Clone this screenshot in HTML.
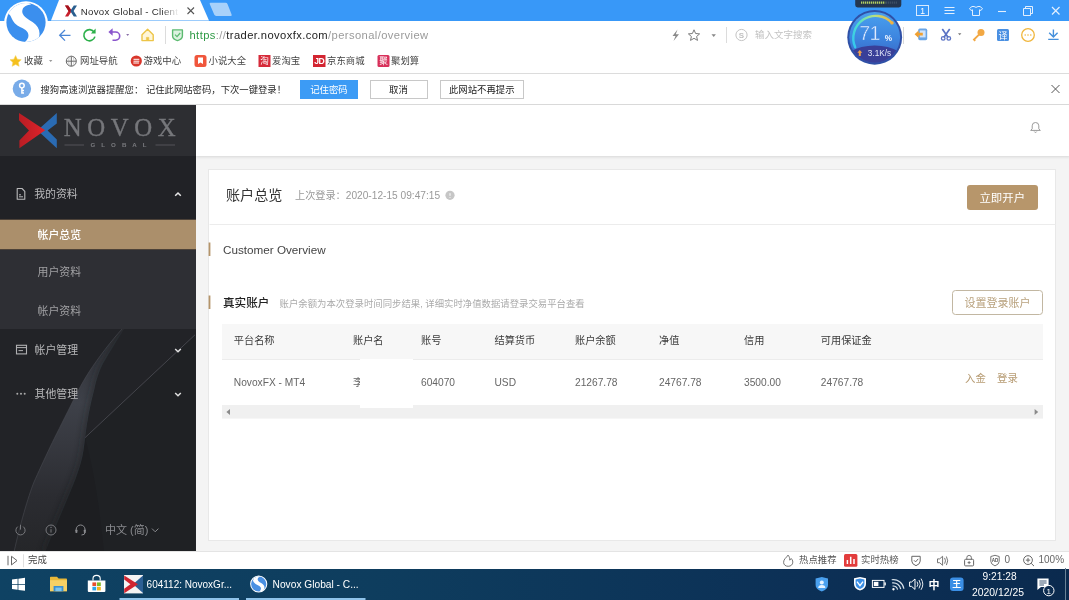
<!DOCTYPE html>
<html lang="zh-CN">
<head>
<meta charset="utf-8">
<title>Novox Global - Client</title>
<style>
*{box-sizing:border-box;margin:0;padding:0}
html,body{width:1069px;height:600px;overflow:hidden;background:#fff}
body{font-family:"Liberation Sans","Noto Sans CJK SC",sans-serif;font-size:12px;color:#333;position:relative}
.abs{position:absolute}
#titlebar{left:0;top:0;width:1069px;height:20.5px;background:#3898f8}
#toolbar{left:0;top:21px;width:1069px;height:27.5px;background:#fff;border-bottom:1px solid #ececec}
#bookmarks{left:0;top:48px;width:1069px;height:26px;background:#fff;border-bottom:1px solid #dcdcdc}
#notify{left:0;top:74px;width:1069px;height:31px;background:#fff;border-bottom:1px solid #d9d9d9}
#page{left:0;top:105px;width:1069px;height:446px;background:#f4f4f4;overflow:hidden}
#status{left:0;top:551px;width:1069px;height:18px;background:#fff;border-top:1px solid #e4e4e4}
#taskbar{left:0;top:569px;width:1069px;height:31px;background:linear-gradient(90deg,#0f4263 0%,#0e3d5e 35%,#0c3056 75%,#0b2a4e 100%)}
.t{position:absolute;white-space:nowrap;line-height:1}
#titlebar,#toolbar,#bookmarks,#notify,#page,#status,#taskbar{will-change:transform}
#sidebar{left:0;top:0;width:195.6px;height:447px;background:#232428;overflow:hidden}
#sidehead{left:0;top:0;width:195.6px;height:51.2px;background:#2d2e32}
#topwhite{left:195.6px;top:0;width:874px;height:51.2px;background:#fff;box-shadow:0 1px 3px rgba(0,0,0,.12)}
#card{left:208.4px;top:64.2px;width:847.6px;height:372px;background:#fff;border:1px solid #e8e8e8}

.cj{font-family:"Liberation Sans","Noto Sans CJK SC",sans-serif}
.bm{position:absolute;top:0;height:25px;line-height:25px;font-size:9.4px;color:#444;white-space:nowrap}
.nbtn{position:absolute;top:6px;height:19px;line-height:18px;font-size:9.4px;text-align:center;border:1px solid #c8c8c8;color:#222;background:#fff;white-space:nowrap}
svg{position:absolute;overflow:visible}

.mi{position:absolute;left:0;width:195px;white-space:nowrap;font-size:10.9px;color:#c4c4c6}
.mi span{position:absolute;line-height:1}

.th{position:absolute;top:231px;font-size:10.2px;color:#3c3c3c;white-space:nowrap;line-height:1}
.td{position:absolute;top:272.5px;font-size:10.2px;color:#666;white-space:nowrap;line-height:1}
</style>
</head>
<body>
<svg id="sogou" width="60" height="50" viewBox="0 0 60 50" style="left:0;top:0;z-index:5">
  <defs><clipPath id="sgc"><circle cx="26" cy="22.5" r="19.6"/></clipPath></defs>
  <circle cx="26" cy="23.3" r="22" fill="#fff"/>
  <circle cx="26" cy="22.5" r="19.6" fill="#3b8fee"/>
  <g clip-path="url(#sgc)">
    <path d="M8 14 C11 14 11.5 20 15 23.5 C18 26.5 22 27.5 25.5 30 C30 33.5 29.5 39 23 43.5 L37 42 C41.5 34 40 27 32.5 22 C26 18 20.8 14.5 22.6 9.5 C23.6 6.5 27 5.2 31 4.6 L26 0 L5 8 Z" fill="#fff"/>
  </g>
</svg>
<svg id="ball" width="70" height="68" viewBox="840 0 70 68" style="left:840px;top:0;z-index:6">
  <defs>
    <linearGradient id="bg1" x1="0" y1="0" x2="0" y2="1"><stop offset="0" stop-color="#4aa0ee"/><stop offset=".5" stop-color="#3d86e0"/><stop offset="1" stop-color="#3860c0"/></linearGradient>
    <linearGradient id="arc1" gradientUnits="userSpaceOnUse" x1="852" y1="48" x2="893" y2="20"><stop offset="0" stop-color="#30c4f4"/><stop offset=".4" stop-color="#4fe0cc"/><stop offset=".75" stop-color="#b8e080"/><stop offset="1" stop-color="#f2b040"/></linearGradient>
    <clipPath id="bc"><circle cx="874.7" cy="37.3" r="25.4"/></clipPath>
  </defs>
  <path d="M855.2 0 H901.3 V5 Q901.3 7.4 898.8 7.4 H857.7 Q855.2 7.4 855.2 5 Z" fill="#24364f"/>
  <path d="M861 2.6 H885.2" stroke="#b4d060" stroke-width="2.2" stroke-dasharray="1.3 .7"/>
  <path d="M886 2.6 H897" stroke="#3c4e64" stroke-width="2.2" stroke-dasharray="1.3 .7"/>
  <circle cx="874.7" cy="37.3" r="27.4" fill="#2f50a6"/>
  <circle cx="874.7" cy="37.3" r="25.4" fill="url(#bg1)"/>
  <g clip-path="url(#bc)"><ellipse cx="874.7" cy="66" rx="34" ry="20.6" fill="#393f98"/></g>
  <path d="M855.2 47.3 A22.4 22.4 0 0 1 892 22.9" fill="none" stroke="url(#arc1)" stroke-width="2.4" stroke-linecap="round"/>
  <circle cx="892" cy="22.9" r="1.7" fill="#f2b040"/>
  <text x="859.3" y="40.3" font-size="19.6" fill="#eef4ff" font-family="Liberation Sans, sans-serif" stroke="#3d86e0" stroke-width=".45" letter-spacing="-.6">71</text>
  <text x="884.8" y="40.8" font-size="8.2" font-weight="bold" fill="#f2f6ff" font-family="Liberation Sans, sans-serif">%</text>
  <path d="M859.8 50 L862.3 52.8 H860.8 V56 H858.8 V52.8 H857.3Z" fill="#f0a04a"/>
  <text x="867.8" y="55.8" font-size="8.2" fill="#e4e8f8" font-family="Liberation Sans, sans-serif">3.1K/s</text>
</svg>
<div id="titlebar" class="abs">
  <svg width="1069" height="22" viewBox="0 0 1069 22" style="left:0;top:0">
    <path d="M59 0 L200 0 L209 20.5 L51 20.5 Z" fill="#fff"/>
    <path d="M210.5 2.8 L225.5 2.8 Q227 2.8 227.6 4.2 L231.6 14.4 Q232.2 16 230.6 16 L216.2 16 Q214.8 16 214.2 14.6 L209.8 4.2 Q209.2 2.8 210.5 2.8Z" fill="#a8d1fa"/>
    <!-- favicon -->
    <g transform="translate(65,5.5)">
      <path d="M0 0 L3.2 0 L6.8 5.5 L3.2 11 L0 11 L3.4 5.5Z" fill="#c8202c"/>
      <path d="M12 0 L8.8 0 L5.2 5.5 L8.8 11 L12 11 L8.6 5.5Z" fill="#2a5f8f"/>
      <path d="M0 0 L3.2 0 L6 4.3 L4.4 6.8 Z" fill="#a3121d"/>
    </g>
    <!-- close tab -->
    <path d="M187.5 7.5 L194 14 M194 7.5 L187.5 14" stroke="#555" stroke-width="1.1" fill="none"/>
    <!-- window buttons -->
    <rect x="916.5" y="5.5" width="12" height="10" fill="none" stroke="#d8eafe" stroke-width="1"/>
    <text x="922.5" y="14" font-size="8.5" fill="#fff" text-anchor="middle" font-family="Liberation Sans, sans-serif">1</text>
    <path d="M944.5 7.5h10M944.5 10.5h10M944.5 13.5h10" stroke="#e2effe" stroke-width="1.1"/>
    <path d="M972 6.5 L969.5 8.5 L971 10.5 L972.5 9.8 L972.5 15.5 L979.5 15.5 L979.5 9.8 L981 10.5 L982.5 8.5 L980 6.5 L978 6.5 Q976 8.3 974 6.5 Z" fill="none" stroke="#e2effe" stroke-width="1"/>
    <path d="M998 11.5h8" stroke="#e2effe" stroke-width="1.1"/>
    <path d="M1023.5 8.5h7v7h-7z M1025.5 8.5v-2h7v7h-2" fill="none" stroke="#e2effe" stroke-width="1"/>
    <path d="M1052 7 L1059.5 14.5 M1059.5 7 L1052 14.5" stroke="#e2effe" stroke-width="1.2"/>
  </svg>
  <div class="t" style="left:80.8px;top:6.8px;font-size:9.7px;letter-spacing:.28px;color:#2a2a2a;width:98px;overflow:hidden;-webkit-mask-image:linear-gradient(90deg,#000 82%,transparent 100%);mask-image:linear-gradient(90deg,#000 82%,transparent 100%)">Novox Global - Client</div>
</div>
<div id="toolbar" class="abs">
  <svg width="1069" height="27" viewBox="0 21 1069 27" style="left:0;top:0">
    <!-- back -->
    <path d="M70.5 35.3 H60 M65 30 L59.7 35.3 L65 40.6" fill="none" stroke="#4a86d6" stroke-width="1.3"/>
    <!-- reload -->
    <path d="M94.2 32.2 A5.6 5.6 0 1 0 94.9 36.6" fill="none" stroke="#2db04a" stroke-width="1.6"/>
    <path d="M95.6 28.6 L95.6 33.4 L90.9 33.4 Z" fill="#2db04a"/>
    <!-- undo -->
    <path d="M111.5 32 H115.6 A4.1 4.1 0 0 1 115.6 40.2 H112.5" fill="none" stroke="#8a55cc" stroke-width="1.6"/>
    <path d="M108.4 32 L112.6 28.3 L112.6 35.7Z" fill="#8a55cc"/>
    <path d="M126.2 34 l3 0 l-1.5 2z" fill="#8a70a8"/>
    <!-- home -->
    <path d="M142 34.8 L147.6 29.2 L153.2 34.8 V40.6 H142 Z" fill="#fff6d8" stroke="#edc548" stroke-width="1.4" stroke-linejoin="round"/>
    <path d="M146.4 40.6v-3.2h2.4v3.2" fill="#edc548" stroke="#edc548" stroke-width=".6"/>
    <path d="M165.5 26 V44" stroke="#dcdcdc" stroke-width="1"/>
    <!-- shield -->
    <path d="M172.6 29.9 H182.4 V36 Q182.4 39.2 177.5 40.6 Q172.6 39.2 172.6 36 Z" fill="#dcf2e0" stroke="#5cba70" stroke-width="1.4" stroke-linejoin="round"/>
    <path d="M175 34.6 L177 36.6 L180.2 33" fill="none" stroke="#5cba70" stroke-width="1.3"/>
    <!-- right side small -->
    <path d="M677.5 29.5 L672.5 36 H675.5 L673.5 41 L679 34.3 H675.8 Z" fill="#8a8a8a"/>
    <path d="M694 29.8 L695.6 33.5 L699.6 33.9 L696.6 36.5 L697.5 40.4 L694 38.3 L690.5 40.4 L691.4 36.5 L688.4 33.9 L692.4 33.5 Z" fill="none" stroke="#7a7a7a" stroke-width="1"/>
    <path d="M711.5 34.3 l4.4 0 l-2.2 2.6z" fill="#888"/>
    <path d="M726.5 27 V43" stroke="#dcdcdc" stroke-width="1"/>
    <circle cx="741.5" cy="35" r="5.6" fill="none" stroke="#c4c4c4" stroke-width="1"/>
    <text x="741.5" y="38" font-size="8" font-weight="bold" fill="#c0c0c0" text-anchor="middle" font-family="Liberation Sans, sans-serif">S</text>
    <path d="M903.5 27 V44" stroke="#d8d8d8" stroke-width="1"/>
    <!-- login door -->
    <rect x="918.2" y="28.6" width="9" height="11.6" rx="1.6" fill="#6aa5e6"/>
    <rect x="919.8" y="30.4" width="5.8" height="7" fill="#cfe3fa"/>
    <path d="M914.6 34.2 L918.6 30.5 V32.8 H922.8 V35.6 H918.6 V37.9 Z" fill="#f0a030"/>
    <!-- scissors -->
    <path d="M942.3 29 L948.2 37.4 M949.7 29 L943.8 37.4" stroke="#5a72c4" stroke-width="1.7" fill="none"/>
    <circle cx="943.2" cy="38.4" r="1.8" fill="none" stroke="#5a72c4" stroke-width="1.3"/>
    <circle cx="948.8" cy="38.4" r="1.8" fill="none" stroke="#5a72c4" stroke-width="1.3"/>
    <path d="M958 33.3 l3.4 0 l-1.7 2z" fill="#777"/>
    <!-- key -->
    <circle cx="981" cy="32.4" r="3.5" fill="#f2a844"/>
    <path d="M979 34.6 L974 39.6 L975.2 40.8" stroke="#f2a844" stroke-width="1.9" fill="none"/>
    <!-- translate -->
    <rect x="997" y="29" width="12" height="12" rx="1.5" fill="#4a90e2"/>
    <text x="1003" y="38.6" font-size="9" fill="#fff" text-anchor="middle" font-family="Liberation Sans, Noto Sans CJK SC, sans-serif">译</text>
    <!-- chat -->
    <circle cx="1028" cy="35" r="6.3" fill="none" stroke="#f0b63c" stroke-width="1.3"/>
    <circle cx="1025.2" cy="35" r=".8" fill="#f0b63c"/><circle cx="1028" cy="35" r=".8" fill="#f0b63c"/><circle cx="1030.8" cy="35" r=".8" fill="#f0b63c"/>
    <!-- download -->
    <path d="M1053.4 29.4 V36.6 M1049.2 32.8 L1053.4 37 L1057.6 32.8 M1048.2 39.4 H1058.6" fill="none" stroke="#4590dc" stroke-width="1.4"/>
  </svg>
  <div class="t" style="left:189.5px;top:8.8px;font-size:11.2px;letter-spacing:.4px;color:#9a9a9a"><span style="color:#2f9a45">https</span>://<span style="color:#222">trader.novoxfx.com</span>/personal/overview</div>
  <div class="t cj" style="left:755px;top:9px;font-size:9.5px;color:#c3c3c3">输入文字搜索</div>
</div>
<div id="bookmarks" class="abs">
  <svg width="1069" height="26" viewBox="0 48 1069 26" style="left:0;top:0">
    <path d="M15.6 55.6 L17.3 59.2 L21.2 59.7 L18.3 62.4 L19.1 66.3 L15.6 64.4 L12.1 66.3 L12.9 62.4 L10 59.7 L13.9 59.2 Z" fill="#f5c01d" stroke="#f5d45c" stroke-width=".6"/>
    <path d="M49 60 l3.4 0 l-1.7 2z" fill="#999"/>
    <circle cx="71.3" cy="61.2" r="5" fill="none" stroke="#666" stroke-width="1"/>
    <path d="M66.3 61.2 H76.3 M71.3 56.2 V66.2" stroke="#666" stroke-width="1"/>
    <ellipse cx="71.3" cy="61.2" rx="2.6" ry="5" fill="none" stroke="#999" stroke-width=".5"/>
    <circle cx="136.3" cy="61" r="5.6" fill="#d9362b"/>
    <path d="M133.5 59.3 H139.3 M133.5 61.2 H139.3 M133.3 63 H139" stroke="#fff" stroke-width="1"/>
    <rect x="194.5" y="55" width="12" height="12" rx="2.5" fill="#f0563c"/>
    <path d="M198 57.6 h5 v6.4 l-2.5 -1.6 l-2.5 1.6z" fill="#fff"/>
    <rect x="258.5" y="55" width="12" height="12" fill="#d62b3a"/>
    <text x="264.5" y="64.4" font-size="8.6" fill="#fff" text-anchor="middle" font-family="Liberation Sans, Noto Sans CJK SC, sans-serif">淘</text>
    <rect x="313" y="55" width="12.5" height="12" fill="#d32531"/>
    <text x="319.2" y="64.3" font-size="8.6" font-weight="bold" fill="#fff" text-anchor="middle" font-family="Liberation Sans, sans-serif" letter-spacing="-.6">JD</text>
    <rect x="377.5" y="55" width="12" height="12" rx="1.5" fill="#d8305a"/>
    <text x="383.5" y="64.4" font-size="8.6" fill="#fff" text-anchor="middle" font-family="Liberation Sans, Noto Sans CJK SC, sans-serif">聚</text>
  </svg>
  <div class="bm" style="left:24px">收藏</div>
  <div class="bm" style="left:80px">网址导航</div>
  <div class="bm" style="left:143.5px">游戏中心</div>
  <div class="bm" style="left:208.5px">小说大全</div>
  <div class="bm" style="left:272px">爱淘宝</div>
  <div class="bm" style="left:327px">京东商城</div>
  <div class="bm" style="left:391px">聚划算</div>
</div>
<div id="notify" class="abs">
  <svg width="1069" height="31" viewBox="0 74 1069 31" style="left:0;top:0">
    <circle cx="21.9" cy="88.8" r="9.2" fill="#78abe8"/>
    <circle cx="21.9" cy="85.6" r="2.3" fill="none" stroke="#fff" stroke-width="1.5"/>
    <path d="M21.9 88 V93.8 M21.9 90.6 H24 M21.9 92.9 H24" stroke="#fff" stroke-width="1.5" fill="none"/>
    <path d="M1051.5 85 L1059.5 93 M1059.5 85 L1051.5 93" stroke="#555" stroke-width="1"/>
  </svg>
  <div class="t" style="left:40.5px;top:1px;height:31px;line-height:31px;font-size:9.35px;color:#2a2a2a">搜狗高速浏览器提醒您： 记住此网站密码，下次一键登录！</div>
  <div class="nbtn" style="left:300px;width:58px;background:#3c9bf5;border-color:#3c9bf5;color:#fff">记住密码</div>
  <div class="nbtn" style="left:369.5px;width:58px">取消</div>
  <div class="nbtn" style="left:439.5px;width:84.5px">此网站不再提示</div>
</div>
<div id="page" class="abs">
  <div id="sidebar" class="abs">
    <svg width="195" height="447" viewBox="0 105 195 447" style="left:0;top:0">
      <defs>
        <linearGradient id="bl1" x1="0" y1="0" x2="1" y2="0"><stop offset="0" stop-color="#4a4c52" stop-opacity=".0"/><stop offset=".55" stop-color="#4a4c53" stop-opacity=".55"/><stop offset="1" stop-color="#5a5c63" stop-opacity=".9"/></linearGradient>
        <linearGradient id="bl2" x1="0" y1="0" x2="0" y2="1"><stop offset="0" stop-color="#55575e" stop-opacity=".9"/><stop offset="1" stop-color="#3a3b40" stop-opacity=".5"/></linearGradient>
      </defs>
      <rect x="0" y="105" width="196" height="447" fill="#222327"/>
      <!-- decorative blade -->
      <defs>
        <clipPath id="bladec"><path d="M122 329 C112 340 98 358 89 372 C80 386 75 397 71 405 C62 423 55 437 50.6 446 C44 460 38 473 34 482 C28 497 20 525 14 552 L45 552 C52 535 62 512 71 490 C74 483 78 473 81 462 C83 455 84 447 85 437.7 C87 422 90 405 94.6 388 C96 381 99 371 103 363.5 C108 355 116 342 124 329Z"/></clipPath>
        <filter id="blur5" x="-50%" y="-50%" width="200%" height="200%"><feGaussianBlur stdDeviation="4"/></filter>
        <linearGradient id="fadeb" gradientUnits="userSpaceOnUse" x1="0" y1="329" x2="0" y2="552"><stop offset="0" stop-color="#2b2d32"/><stop offset=".15" stop-color="#34363d"/><stop offset=".33" stop-color="#3e4149"/><stop offset=".5" stop-color="#373940"/><stop offset=".75" stop-color="#2b2c31"/><stop offset="1" stop-color="#252629"/></linearGradient>
      </defs>
      <path d="M85 437.7 L195 335 V552 H100 C98 510 92 470 85 437.7Z" fill="#1f2024" opacity=".8"/>
      <path d="M85 437.7 C84 447 83 455 81 462 C78 473 74 483 71 490 C62 512 52 535 45 552 L104 552 C100 510 94 470 85 437.7Z" fill="#1d1e21" opacity=".9"/>
      <g clip-path="url(#bladec)">
        <rect x="0" y="329" width="195" height="223" fill="url(#fadeb)"/>
        <path d="M126 329 C118 342 110 355 105 363.5 C101 371 98 381 96.6 388 C92 405 89 422 87 437.7 C86 447 85 455 83 462 C80 473 76 483 73 490 C64 512 54 535 47 552" fill="none" stroke="#1f2024" stroke-width="5" filter="url(#blur5)" opacity=".8"/>
      </g>
      <path d="M122 329 C112 340 98 358 89 372 C80 386 75 397 71 405 C62 423 55 437 50.6 446 C44 460 38 473 34 482 C28 497 20 525 14 552" fill="none" stroke="#4a4c53" stroke-width=".7" opacity=".8"/>
      <path d="M195 334.8 L85 437.7" stroke="#484a50" stroke-width=".9" fill="none"/>
    </svg>
    <div id="sidehead" class="abs"></div>
    <svg width="195" height="52" viewBox="0 105 195 52" style="left:0;top:0">
      <defs>
        <linearGradient id="lr" x1="0" y1="0" x2="1" y2="0"><stop offset="0" stop-color="#b81d24"/><stop offset="1" stop-color="#e0232a"/></linearGradient>
      </defs>
      <path d="M56.8 113 L56.8 123.4 L47.6 130.4 L56.8 139.6 L56.8 148.2 L39.5 132.3 L39.5 128.4 Z" fill="#2a6bb3"/>
      <path d="M19 113 L45.2 130.3 L19.4 148.3 L19.4 140.6 L29 130.6 L19 120.2 Z" fill="url(#lr)"/>
      <path d="M64.5 145 H84 M155.5 145 H175" stroke="#5d5e62" stroke-width=".8"/>
    </svg>
    <div class="t" style="left:63.8px;top:115.5px;margin-top:-105px;font-family:'Liberation Serif',serif;font-size:24.8px;letter-spacing:5.6px;color:#76777b;-webkit-text-stroke:.35px #76777b">NOVOX</div>
    <div class="t" style="left:90.5px;top:142px;margin-top:-105px;font-size:6.2px;font-weight:bold;letter-spacing:6px;color:#7a7b7f">GLOBAL</div>

    <div class="abs" style="left:0;top:51.2px;width:196px;height:63px;background:#212226"></div>
    <div class="abs" style="left:0;top:114px;width:196px;height:31px;background:#ab8f6b;border-top:1px solid #4d4238;border-bottom:1px solid #4d4238"></div>
    <div class="abs" style="left:0;top:145px;width:196px;height:79px;background:#2e2f34"></div>
    <svg width="195" height="447" viewBox="0 105 195 447" style="left:0;top:0">
      <!-- doc icon -->
      <path d="M17.2 188.5 H22 L24.8 191.3 V199.2 H17.2 Z" fill="none" stroke="#b9b9bb" stroke-width="1.1" stroke-linejoin="round"/>
      <path d="M19 194.8 H21 M19 196.8 H23" stroke="#b9b9bb" stroke-width="1"/>
      <path d="M175.2 195.8 L178 193 L180.8 195.8" fill="none" stroke="#e8e8e8" stroke-width="1.5"/>
      <!-- card icon -->
      <rect x="16.5" y="345.3" width="10" height="8.6" fill="none" stroke="#b0b0b2" stroke-width="1.1"/>
      <path d="M16.5 347.6 H26.5 M18.5 350.6 H23" stroke="#b0b0b2" stroke-width="1"/>
      <path d="M175.2 349 L178 351.8 L180.8 349" fill="none" stroke="#e0e0e0" stroke-width="1.5"/>
      <circle cx="17.3" cy="393.8" r="1" fill="#aaa"/><circle cx="21" cy="393.8" r="1" fill="#aaa"/><circle cx="24.7" cy="393.8" r="1" fill="#aaa"/>
      <path d="M175.2 393 L178 395.8 L180.8 393" fill="none" stroke="#e0e0e0" stroke-width="1.5"/>
      <!-- bottom icons -->
      <path d="M17.8 526.6 A4.6 4.6 0 1 0 23.2 526.6 M20.5 524.8 V529.6" fill="none" stroke="#77787c" stroke-width="1"/>
      <circle cx="51" cy="530" r="5" fill="none" stroke="#77787c" stroke-width="1"/>
      <path d="M51 529.2 V532.6" stroke="#77787c" stroke-width="1"/><circle cx="51" cy="527.4" r=".7" fill="#77787c"/>
      <path d="M76.2 531 V529.4 A4.4 4.4 0 0 1 85 529.4 V531 M85 532.5 Q85 535 81.5 535" fill="none" stroke="#8a8b8f" stroke-width="1"/>
      <rect x="75.4" y="529.4" width="2" height="3.6" rx=".8" fill="#8a8b8f"/><rect x="83.8" y="529.4" width="2" height="3.6" rx=".8" fill="#8a8b8f"/>
      <path d="M152 528.6 L155.2 531.8 L158.4 528.6" fill="none" stroke="#8a8b8f" stroke-width="1"/>
    </svg>
    <div class="t" style="left:34.2px;top:84.3px;font-size:10.9px;color:#b8b8ba">我的资料</div>
    <div class="t" style="left:37.5px;top:124.6px;font-size:10.9px;color:#fff;font-weight:500">帐户总览</div>
    <div class="t" style="left:37.5px;top:162.3px;font-size:10.9px;color:#a0a0a3">用户资料</div>
    <div class="t" style="left:37.5px;top:200.7px;font-size:10.9px;color:#a0a0a3">帐户资料</div>
    <div class="t" style="left:34.5px;top:240.2px;font-size:10.9px;color:#b8b8ba">帐户管理</div>
    <div class="t" style="left:34.5px;top:284.3px;font-size:10.9px;color:#b8b8ba">其他管理</div>
    <div class="t" style="left:105px;top:419.5px;font-size:11px;color:#8a8b8f">中文 (简)</div>
  </div>
  <div id="topwhite" class="abs"></div>
  <div id="card" class="abs"></div>
  <div id="cardc" class="abs" style="left:0;top:0;width:1069px;height:447px">
    <svg width="1069" height="447" viewBox="0 105 1069 447" style="left:0;top:0">
      <path d="M209.5 224.5 H1055.5" stroke="#ececec" stroke-width="1"/>
      <rect x="208.6" y="242.5" width="1.8" height="13.5" fill="#b4946a"/>
      <rect x="208.6" y="295.5" width="1.8" height="13.5" fill="#b4946a"/>
      <circle cx="450" cy="195.3" r="4.6" fill="#c6c6c6"/>
      <path d="M450 193.2 V195.8 M450 197 V197.8" stroke="#fff" stroke-width="1"/>
      <!-- bell -->
      <g transform="translate(-.1,-1.4)"><path d="M1032.3 130.2 V127.2 A3.3 3.3 0 0 1 1038.9 127.2 V130.2 L1040.4 131.8 H1030.8 Z" fill="none" stroke="#9a9a9a" stroke-width="1" stroke-linejoin="round"/>
      <path d="M1034.4 133 A1.3 1.3 0 0 0 1036.8 133" fill="none" stroke="#9a9a9a" stroke-width="1"/></g>
      <!-- table -->
      <rect x="222" y="324" width="821" height="35" fill="#f7f7f7"/>
      <path d="M222 359.5 H1043" stroke="#ececec" stroke-width="1"/>
      <rect x="222" y="405" width="821" height="13.6" fill="#f0f0f0"/>
      <path d="M226.4 412 L230 409 V415Z" fill="#8a8a8a"/>
      <path d="M1038.2 412 L1034.6 409 V415Z" fill="#8a8a8a"/>
    </svg>
    <div class="t" style="left:226px;top:83px;font-size:14.1px;color:#333">账户总览</div>
    <div class="t" style="left:295px;top:85.5px;font-size:10.17px;color:#999">上次登录：2020-12-15 09:47:15</div>
    <div class="t" style="left:966.5px;top:79.5px;width:71.5px;height:25px;line-height:26.5px;border-radius:3px;background:#b7966b;color:#fff;font-size:11.4px;text-align:center">立即开户</div>
    <div class="t" style="left:223px;top:139px;font-size:11.7px;color:#444">Customer Overview</div>
    <div class="t" style="left:223px;top:191.5px;font-size:11.6px;color:#222;font-weight:500">真实账户</div>
    <div class="t" style="left:279.5px;top:193.5px;font-size:9.4px;color:#aaa">账户余额为本次登录时间同步结果, 详细实时净值数据请登录交易平台查看</div>
    <div class="t" style="left:952px;top:185px;width:91px;height:25px;line-height:25px;border-radius:3.5px;border:1px solid #c2b7a2;background:#fff;color:#b9a27e;font-size:11px;text-align:center">设置登录账户</div>
    <div class="th" style="left:233.8px">平台名称</div>
    <div class="th" style="left:353px">账户名</div>
    <div class="th" style="left:421px">账号</div>
    <div class="th" style="left:494.5px">结算货币</div>
    <div class="th" style="left:575px">账户余额</div>
    <div class="th" style="left:659px">净值</div>
    <div class="th" style="left:744px">信用</div>
    <div class="th" style="left:820.8px">可用保证金</div>
    <div class="td" style="left:233.8px">NovoxFX - MT4</div>
    <div class="td" style="left:353px">李</div>
    <div class="abs" style="left:360px;top:254px;width:53px;height:49px;background:#fff"></div>
    <div class="td" style="left:421px">604070</div>
    <div class="td" style="left:494.5px">USD</div>
    <div class="td" style="left:575px">21267.78</div>
    <div class="td" style="left:659px">24767.78</div>
    <div class="td" style="left:744px">3500.00</div>
    <div class="td" style="left:820.8px">24767.78</div>
    <div class="td" style="left:965px;top:268.5px;color:#b79c74;font-size:10.4px">入金</div>
    <div class="td" style="left:997px;top:268.5px;color:#b79c74;font-size:10.4px">登录</div>
  </div>
</div>
<div id="status" class="abs">
  <svg width="1069" height="18" viewBox="0 551.7 1069 18" style="left:0;top:0">
    <path d="M8 555.5 V565 M11.5 556 L17 560.3 L11.5 564.6Z" fill="none" stroke="#666" stroke-width="1"/>
    <path d="M23.5 554 V567" stroke="#e0e0e0" stroke-width="1"/>
    <!-- flame -->
    <path d="M788 554.8 C786.5 557.5 783.6 558.6 783.6 562 C783.6 564.6 785.6 566 788.2 566 C790.8 566 792.8 564.4 792.8 561.8 C792.8 560.2 792 559 791.2 558.2 C790.8 559.2 790.3 559.6 789.7 559.8 C789.9 558 789.3 556.2 788 554.8Z" fill="none" stroke="#666" stroke-width=".9" stroke-linejoin="round"/>
    <rect x="844" y="553.6" width="13.4" height="12.8" rx="1.5" fill="#e23c3c"/>
    <path d="M847.4 563.6 V559.6 M850.7 563.6 V556.4 M854 563.6 V558.6" stroke="#fff" stroke-width="1.5"/>
    <!-- shield -->
    <path d="M911.8 556 H920.2 V560.8 Q920.2 563.8 916 565.4 Q911.8 563.8 911.8 560.8Z" fill="none" stroke="#666" stroke-width="1" stroke-linejoin="round"/>
    <path d="M914 560 L915.6 561.6 L918.2 558.6" fill="none" stroke="#666" stroke-width="1"/>
    <!-- speaker -->
    <path d="M937.5 558.6 H939.6 L942.6 556 V565 L939.6 562.4 H937.5Z" fill="none" stroke="#666" stroke-width=".9" stroke-linejoin="round"/>
    <path d="M944.6 557.6 Q946.4 560.5 944.6 563.4 M946.4 556.2 Q949 560.5 946.4 564.8" fill="none" stroke="#666" stroke-width=".9"/>
    <!-- lock -->
    <rect x="964.6" y="559" width="9" height="6.6" rx="1" fill="none" stroke="#666" stroke-width="1"/>
    <path d="M966.8 559 V557.4 A2.3 2.3 0 0 1 971.4 557.4 V559 M969.1 560.8 V563.8 M967.6 562.3 H970.6" fill="none" stroke="#666" stroke-width=".9"/>
    <!-- ad -->
    <path d="M990.8 556.2 L995 555 L999.2 556.2 V561 Q999.2 564 995 565.6 Q990.8 564 990.8 561Z" fill="none" stroke="#666" stroke-width=".9" stroke-linejoin="round"/>
    <text x="995" y="562.2" font-size="4.6" font-weight="bold" fill="#555" text-anchor="middle" font-family="Liberation Sans, sans-serif">AD</text>
    <!-- zoom -->
    <circle cx="1028" cy="559.8" r="4.4" fill="none" stroke="#666" stroke-width="1"/>
    <path d="M1025.8 559.8 H1030.2 M1028 557.6 V562 M1031.2 563 L1034 565.8" stroke="#666" stroke-width="1"/>
  </svg>
  <div class="t" style="left:28px;top:3px;font-size:9.4px;color:#444">完成</div>
  <div class="t" style="left:799px;top:3px;font-size:9.4px;color:#555">热点推荐</div>
  <div class="t" style="left:861px;top:3px;font-size:9.4px;color:#555">实时热榜</div>
  <div class="t" style="left:1004.5px;top:3px;font-size:10px;color:#666">0</div>
  <div class="t" style="left:1038.5px;top:3px;font-size:10px;color:#666">100%</div>
</div>
<div id="taskbar" class="abs">
  <svg width="1069" height="31" viewBox="0 569 1069 31" style="left:0;top:0">
    <!-- windows -->
    <path d="M12 579.6 L17.6 578.8 V583.9 H12Z M18.4 578.7 L25 577.7 V583.9 H18.4Z M12 584.7 H17.6 V589.8 L12 589Z M18.4 584.7 H25 V590.8 L18.4 589.9Z" fill="#fff"/>
    <!-- folder -->
    <path d="M50 577.6 Q50 576.8 50.8 576.8 H57 L58.6 578.6 H66.2 Q67 578.6 67 579.4 V591.2 H50Z" fill="#e9b839"/>
    <rect x="50" y="580.2" width="17" height="11" fill="#f6d065"/>
    <path d="M53.6 591.2 V586 H63.4 V591.2Z" fill="#3a8fd0"/>
    <rect x="55.4" y="587.6" width="6.2" height="3.6" fill="#7cc4f0"/>
    <!-- store -->
    <path d="M87.8 580.4 H105.4 V591 Q105.4 592 104.4 592 H88.8 Q87.8 592 87.8 591Z" fill="#fff"/>
    <path d="M93 580.4 V578.6 A3.6 3.2 0 0 1 100.2 578.6 V580.4" fill="none" stroke="#fff" stroke-width="1.1"/>
    <rect x="92.4" y="582.4" width="3.8" height="3.6" fill="#e84e2c"/><rect x="97" y="582.4" width="3.8" height="3.6" fill="#7fba28"/>
    <rect x="92.4" y="586.8" width="3.8" height="3.6" fill="#2da3e8"/><rect x="97" y="586.8" width="3.8" height="3.6" fill="#f5b51c"/>
    <!-- novox app -->
    <rect x="124" y="575" width="19" height="18.4" fill="#f4f4f4"/>
    <path d="M143 575.6 V593 L133 584.2Z" fill="#2c5f94"/>
    <path d="M124.2 575.4 L138 584.2 L124.2 593.2 L124.2 588.8 L130.4 584.2 L124.2 579.6Z" fill="#cf2430"/>
    <rect x="119.5" y="598" width="119.5" height="2" fill="#8fc3ea"/>
    <rect x="246" y="598" width="119.5" height="2" fill="#8fc3ea"/>
    <rect x="246" y="568" width="119.5" height="30" fill="#1d4868" opacity=".0"/>
    <!-- sogou small -->
    <circle cx="258.7" cy="584" r="8.6" fill="#fff"/>
    <circle cx="258.7" cy="584" r="7.6" fill="#4a90e2"/>
    <path d="M253 580.6 C254 584 257 584.6 259.4 586 C261.6 587.4 261.4 589.6 259.6 591.4 L263.4 590.4 C265.4 587.4 264.4 584.8 261.6 583.2 C258.8 581.6 257 580.4 257.8 578.4 C258.2 577.4 259.4 577 260.6 576.8 L258 576.2 L254 578Z" fill="#fff"/>
    <!-- tray -->
    <path d="M815.6 578.6 L821.8 577 L828 578.6 V585 Q828 589.4 821.8 591.6 Q815.6 589.4 815.6 585Z" fill="#4aa0ee"/>
    <circle cx="821.8" cy="582.4" r="2" fill="#e6f2ff"/>
    <path d="M818.2 588 Q818.2 585 821.8 585 Q825.4 585 825.4 588Z" fill="#e6f2ff"/>
    <path d="M854 578.2 L860 577 L866 578.2 V584 Q866 588.6 860 590.6 Q854 588.6 854 584Z" fill="#fff"/>
    <path d="M855.6 579.4 L860 578.6 L864.4 579.4 V584 Q864.4 587.4 860 589 Q855.6 587.4 855.6 584Z" fill="#3b8fe6"/>
    <path d="M857 581.6 L860 585.6 L863 581.6" fill="none" stroke="#fff" stroke-width="1.4"/>
    <!-- battery -->
    <rect x="872.4" y="580.4" width="11.6" height="7" fill="none" stroke="#fff" stroke-width="1"/>
    <rect x="873.8" y="581.8" width="4.6" height="4.2" fill="#fff"/>
    <rect x="884.4" y="582.4" width="1.4" height="3" fill="#fff"/>
    <!-- wifi -->
    <path d="M893.4 590.4 A1.2 1.2 0 1 1 893.5 590.4Z" fill="#fff"/>
    <path d="M893.2 586 A4.2 4.2 0 0 1 897.6 590.2 M893.2 582.8 A7.4 7.4 0 0 1 900.8 590.2 M893.2 579.6 A10.6 10.6 0 0 1 904 590.2" fill="none" stroke="#d8e2ea" stroke-width="1.2" transform="rotate(-8 893.4 590.4)"/>
    <!-- speaker -->
    <path d="M909.6 582 H911.6 L915 579 V589.4 L911.6 586.4 H909.6Z" fill="none" stroke="#fff" stroke-width="1" stroke-linejoin="round"/>
    <path d="M917 581.6 Q918.8 584.2 917 586.8 M919 580 Q921.8 584.2 919 588.4 M921 578.6 Q924.6 584.2 921 589.8" fill="none" stroke="#fff" stroke-width=".9"/>
    <!-- ime -->
    <rect x="950" y="577.4" width="13.6" height="13.6" rx="3" fill="#3b8fe6"/>
    <!-- notif -->
    <path d="M1037.4 578.4 H1048.6 V587 H1041 L1037.4 590Z" fill="#fff"/>
    <path d="M1039.4 581 H1046.6 M1039.4 583 H1046.6 M1039.4 585 H1044" stroke="#0b2b4f" stroke-width=".8"/>
    <circle cx="1048.8" cy="590.6" r="5.2" fill="#0b2b4f" stroke="#fff" stroke-width="1"/>
    <path d="M1065.5 568 V600" stroke="#6a8296" stroke-width="1"/>
  </svg>
  <div class="t" style="left:146.6px;top:10.5px;font-size:10px;color:#fff">604112: NovoxGr...</div>
  <div class="t" style="left:272.6px;top:10.5px;font-size:10.2px;color:#fff">Novox Global - C...</div>
  <div class="t" style="left:928.4px;top:10.5px;font-size:11px;color:#fff;font-weight:bold">中</div>
  <div class="t" style="left:952.3px;top:11.3px;font-size:8.8px;color:#fff;font-weight:bold">王</div>
  <div class="t" style="left:982.6px;top:3px;font-size:10.2px;color:#fff">9:21:28</div>
  <div class="t" style="left:972px;top:18.5px;font-size:10.4px;color:#fff">2020/12/25</div>
  <div class="t" style="left:1046.6px;top:18.6px;font-size:8px;color:#fff">1</div>
</div>
</body>
</html>
